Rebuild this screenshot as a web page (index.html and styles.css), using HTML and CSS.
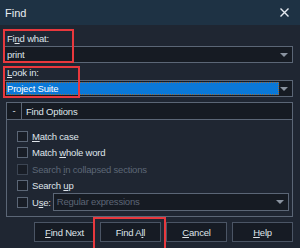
FILE: index.html
```html
<!DOCTYPE html>
<html lang="en">
<head>
    <meta charset="UTF-8">
    <title>Find</title>
    <link rel="stylesheet" href="styles.css">
</head>
<body>
    <div class="window">
        <div class="titlebar">
            <span class="title">Find</span>
            <svg class="close" width="9" height="9" viewBox="0 0 9 9">
                <path d="M0.5 0.5 L8.5 8.5 M8.5 0.5 L0.5 8.5" stroke="#e6eaf0" stroke-width="1.4" />
            </svg>
        </div>

        <div class="content">
            <div class="field">
                <label>Fi<u>n</u>d what:</label>
                <div class="combo">
                    <span class="value">print</span>
                    <span class="arrow"></span>
                </div>
            </div>

            <div class="field">
                <label><u>L</u>ook in:</label>
                <div class="combo">
                    <span class="value selected">Project Suite</span>
                    <span class="arrow"></span>
                </div>
            </div>

            <div class="group">
                <div class="group-head">
                    <span class="toggle">-</span>
                    <span class="group-title">Find Options</span>
                </div>
                <div class="options">
                    <div class="check"><span class="box"></span><span><u>M</u>atch case</span></div>
                    <div class="check"><span class="box"></span><span>Match <u>w</u>hole word</span></div>
                    <div class="check disabled"><span class="box"></span><span>Search <u>i</u>n collapsed sections</span></div>
                    <div class="check"><span class="box"></span><span>Search <u>u</u>p</span></div>
                    <div class="check">
                        <span class="box"></span><span>U<u>s</u>e:</span>
                        <div class="combo small">
                            <span class="value muted">Regular expressions</span>
                            <span class="arrow"></span>
                        </div>
                    </div>
                </div>
            </div>

            <div class="buttons">
                <button><u>F</u>ind Next</button>
                <button>Find A<u>l</u>l</button>
                <button><u>C</u>ancel</button>
                <button><u>H</u>elp</button>
            </div>
        </div>

        <div class="mark mark-what"></div>
        <div class="mark mark-look"></div>
        <div class="mark mark-all"></div>
    </div>
</body>
</html>
```

FILE: styles.css
```css
body {
    margin: 0;
    font-family: "Liberation Sans", Arial, sans-serif;
    font-size: 9.5px;
    letter-spacing: -0.2px;
    color: #dfe4ea;
    background: #1f2632;
}
u {
    text-decoration-thickness: 1px;
    text-underline-offset: 1px;
}
.window {
    position: relative;
    width: 300px;
    height: 248px;
    background: #1f2632;
    overflow: hidden;
}
.titlebar {
    height: 25px;
    background: #1e3244;
    display: flex;
    align-items: center;
    justify-content: space-between;
    padding: 0 11px 0 5px;
}
.title {
    font-size: 11px;
    letter-spacing: 0;
    color: #e9edf2;
}
.content {
    padding: 6px 7px 0 4px;
}
.field label {
    display: block;
    height: 15px;
    line-height: 15px;
    padding-left: 3px;
}
.field + .field {
    margin-top: 2px;
}
.combo {
    height: 17px;
    box-sizing: border-box;
    border: 1px solid #5b6676;
    background: #161b23;
    display: flex;
    align-items: center;
    padding: 1px;
}
.value {
    flex: 1;
    height: 100%;
    line-height: 13px;
    padding-left: 1px;
}
.value.selected {
    background: #0a78d7;
    color: #fff;
    outline: 1px dotted #9a6a3a;
    outline-offset: -1px;
    flex: none;
    width: 272px;
}
.value.muted {
    color: #5d6676;
    padding-left: 2px;
}
.arrow {
    margin-left: auto;
    margin-right: 3px;
    width: 0;
    height: 0;
    border-left: 4px solid transparent;
    border-right: 4px solid transparent;
    border-top: 4px solid #8a93a0;
}
.group {
    margin-top: 5px;
    margin-left: 2px;
    height: 115px;
    box-sizing: border-box;
    border: 1px solid #5b6676;
}
.group-head {
    height: 16px;
    display: flex;
    align-items: center;
    background: #161b23;
    border-bottom: 1px solid #5b6676;
}
.toggle {
    width: 14px;
    height: 16px;
    line-height: 15px;
    text-align: center;
    border-right: 1px solid #5b6676;
}
.group-title {
    padding-left: 4px;
}
.options {
    padding: 8px 0 0 10px;
}
.check {
    height: 16.5px;
    display: flex;
    align-items: center;
}
.box {
    width: 11px;
    height: 11px;
    box-sizing: border-box;
    border: 1px solid #5b6676;
    background: #181d26;
    margin-right: 4px;
}
.check.disabled {
    color: #5d6676;
}
.check.disabled .box {
    border-color: #3c4553;
}
.combo.small {
    width: 236px;
    height: 18px;
    margin-left: 2px;
}
.buttons {
    display: flex;
    justify-content: flex-end;
    gap: 5px;
    margin-top: 5px;
}
button {
    width: 61px;
    height: 20px;
    border: 1px solid #4b5565;
    background: #161b24;
    color: #dfe4ea;
    font-family: inherit;
    font-size: 9.5px;
    letter-spacing: -0.2px;
    padding: 0;
}
.mark {
    position: absolute;
    border: 2px solid #e8383d;
}
.mark-what {
    left: 3px;
    top: 29px;
    width: 67px;
    height: 30px;
}
.mark-look {
    left: 3px;
    top: 66px;
    width: 73px;
    height: 28px;
}
.mark-all {
    left: 93px;
    top: 217px;
    width: 69px;
    height: 30px;
}
```
